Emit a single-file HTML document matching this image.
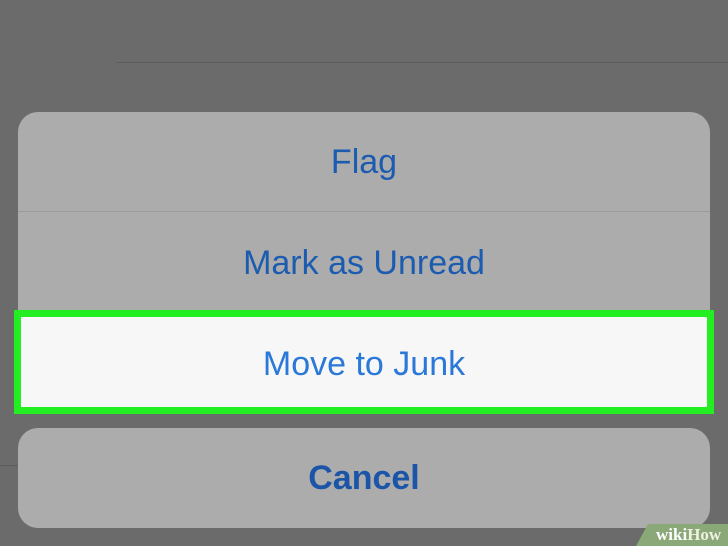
<!DOCTYPE html>
<html><head><style>
body{margin:0;width:728px;height:546px;background:#6b6b6b;position:relative;overflow:hidden;font-family:"Liberation Sans",Arial,sans-serif}
.a{position:absolute}
.t{position:absolute;left:0;right:0;text-align:center;font-size:34px;color:#1c5cb0}
</style></head><body>
<div class="a" style="left:116px;top:62px;width:612px;height:1px;background:#5e5e5e"></div>
<div class="a" style="left:0;top:465px;width:20px;height:1px;background:#5e5e5e"></div>
<div class="a" style="left:18px;top:112px;width:692px;height:300px;background:#acacac;border-radius:20px"></div>
<div class="a" style="left:18px;top:211px;width:692px;height:1px;background:#9c9c9c"></div>
<div class="t" style="top:143px">Flag</div>
<div class="t" style="top:244px">Mark as Unread</div>
<div class="a" style="left:14px;top:310px;width:686px;height:90px;background:#f7f7f7;border:7px solid #22ee22"></div>
<div class="t" style="top:345px;color:#2a78d8">Move to Junk</div>
<div class="a" style="left:18px;top:428px;width:692px;height:100px;background:#acacac;border-radius:20px"></div>
<div class="t" style="top:459px;font-weight:bold;color:#1a55a8">Cancel</div>
<div class="a" style="left:636px;top:524px;width:92px;height:22px;background:#8aa878;clip-path:polygon(12px 0,100% 0,100% 100%,0 100%)"></div>
<div class="a" style="left:656px;top:525px;font-family:'Liberation Serif',serif;font-size:17px;font-weight:bold;color:#fff">wiki<span style="color:#f0f0e0">How</span></div>
</body></html>
